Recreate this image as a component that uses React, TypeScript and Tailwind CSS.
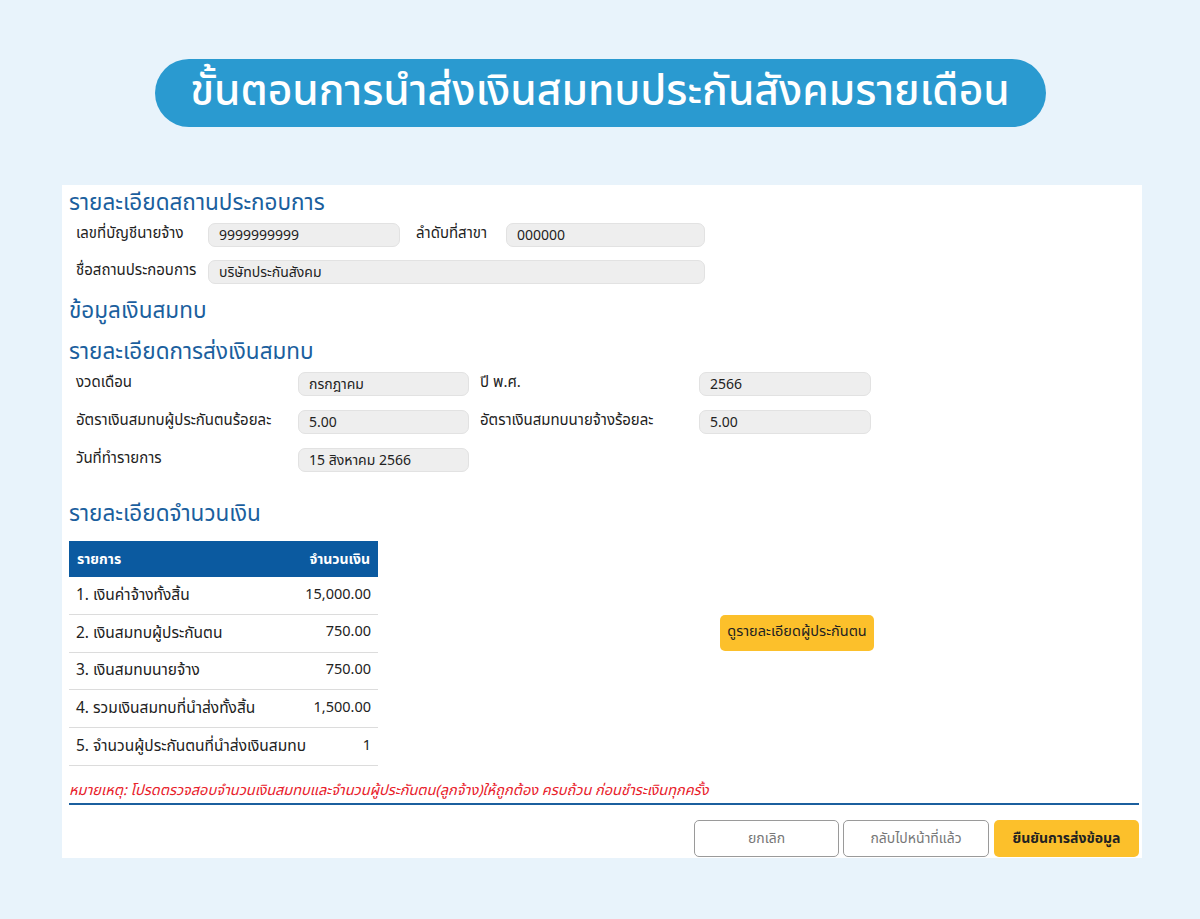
const font = { fontFamily: '"Noto Sans Thai", "Noto Sans", Tahoma, sans-serif' };

function Field({ value, className }: { value: string; className: string }) {
  return (
    <div
      className={`h-[24px] rounded-[7px] bg-[#eeeeee] border border-[#e2e2e2] px-[10px] flex items-center text-[14px] text-[#222] ${className}`}
    >
      {value}
    </div>
  );
}

const rows = [
  ['1. เงินค่าจ้างทั้งสิ้น', '15,000.00'],
  ['2. เงินสมทบผู้ประกันตน', '750.00'],
  ['3. เงินสมทบนายจ้าง', '750.00'],
  ['4. รวมเงินสมทบที่นำส่งทั้งสิ้น', '1,500.00'],
  ['5. จำนวนผู้ประกันตนที่นำส่งเงินสมทบ', '1'],
];

export default function App() {
  return (
    <div className="w-[1200px] h-[919px] bg-[#e8f3fb] flex flex-col items-center" style={font}>
      <div className="mt-[59px] w-[891px] h-[68px] rounded-full bg-[#2a9ad0] flex items-center justify-center">
        <h1 className="text-white text-[42.5px] font-medium leading-none pb-[2px]">
          ขั้นตอนการนำส่งเงินสมทบประกันสังคมรายเดือน
        </h1>
      </div>

      <div className="mt-[58px] ml-[4px] w-[1080px] h-[673px] bg-white pl-[7px] pr-[3px] pt-[3px] flex flex-col">
        <h2 className="text-[#1b5f9e] text-[22.5px] leading-[30px]">รายละเอียดสถานประกอบการ</h2>
        <div className="flex items-center mt-[5px] pl-[7px] text-[15px] text-[#222]">
          <span className="w-[132px] -mt-[2px]">เลขที่บัญชีนายจ้าง</span>
          <Field value="9999999999" className="w-[192px]" />
          <span className="ml-[16px] w-[90px] -mt-[2px]">ลำดับที่สาขา</span>
          <Field value="000000" className="w-[199px]" />
        </div>
        <div className="flex items-center mt-[13px] pl-[7px] text-[15px] text-[#222]">
          <span className="w-[132px] -mt-[2px]">ชื่อสถานประกอบการ</span>
          <Field value="บริษัทประกันสังคม" className="w-[497px]" />
        </div>

        <h2 className="text-[#1b5f9e] text-[22.5px] leading-[30px] mt-[12px]">ข้อมูลเงินสมทบ</h2>
        <h2 className="text-[#1b5f9e] text-[22.5px] leading-[30px] mt-[11px]">รายละเอียดการส่งเงินสมทบ</h2>

        <div className="flex flex-col gap-[14px] mt-[5px] pl-[7px] text-[15px] text-[#222]">
          <div className="flex items-center">
            <span className="w-[222px] -mt-[2px]">งวดเดือน</span>
            <Field value="กรกฎาคม" className="w-[171px]" />
            <span className="ml-[11px] w-[219px] -mt-[2px]">ปี พ.ศ.</span>
            <Field value="2566" className="w-[172px]" />
          </div>
          <div className="flex items-center">
            <span className="w-[222px] -mt-[2px]">อัตราเงินสมทบผู้ประกันตนร้อยละ</span>
            <Field value="5.00" className="w-[171px]" />
            <span className="ml-[11px] w-[219px] -mt-[2px]">อัตราเงินสมทบนายจ้างร้อยละ</span>
            <Field value="5.00" className="w-[172px]" />
          </div>
          <div className="flex items-center">
            <span className="w-[222px] -mt-[2px]">วันที่ทำรายการ</span>
            <Field value="15 สิงหาคม 2566" className="w-[171px]" />
          </div>
        </div>

        <h2 className="text-[#1b5f9e] text-[22.5px] leading-[30px] mt-[27px]">รายละเอียดจำนวนเงิน</h2>

        <div className="flex mt-[12px]">
          <div className="w-[309px] text-[#222]">
            <div className="h-[36px] bg-[#0b5aa0] text-white text-[14px] font-bold flex items-center justify-between px-[8px]">
              <span>รายการ</span>
              <span>จำนวนเงิน</span>
            </div>
            {rows.map(([k, v]) => (
              <div key={k} className="h-[37.8px] border-b border-[#dcdcdc] flex items-center justify-between px-[7px]">
                <span className="text-[15.5px]">{k}</span>
                <span className="text-[14.5px]">{v}</span>
              </div>
            ))}
          </div>
          <div className="ml-[342px] mt-[74px]">
            <button className="h-[36px] w-[154px] rounded-[5px] bg-[#fcc02b] text-[14.5px] text-[#222]">
              ดูรายละเอียดผู้ประกันตน
            </button>
          </div>
        </div>

        <p className="mt-[15px] text-[14.5px] italic text-[#e8202a] leading-[20px]">
          หมายเหตุ: โปรดตรวจสอบจำนวนเงินสมทบและจำนวนผู้ประกันตน(ลูกจ้าง)ให้ถูกต้อง ครบถ้วน ก่อนชำระเงินทุกครั้ง
        </p>
        <div className="h-[2px] bg-[#1b5f9e] mt-[2px] w-[1070px]" />

        <div className="flex justify-end gap-[4px] mt-[15px] w-[1070px]">
          <button className="h-[37px] w-[145px] rounded-[5px] border border-[#9a9a9a] bg-white text-[14px] text-[#777]">
            ยกเลิก
          </button>
          <button className="h-[37px] w-[146px] rounded-[5px] border border-[#9a9a9a] bg-white text-[14px] text-[#777]">
            กลับไปหน้าที่แล้ว
          </button>
          <button className="ml-[1px] h-[37px] w-[145px] rounded-[5px] bg-[#fcc02b] text-[14px] font-bold text-[#222]">
            ยืนยันการส่งข้อมูล
          </button>
        </div>
      </div>
    </div>
  );
}
